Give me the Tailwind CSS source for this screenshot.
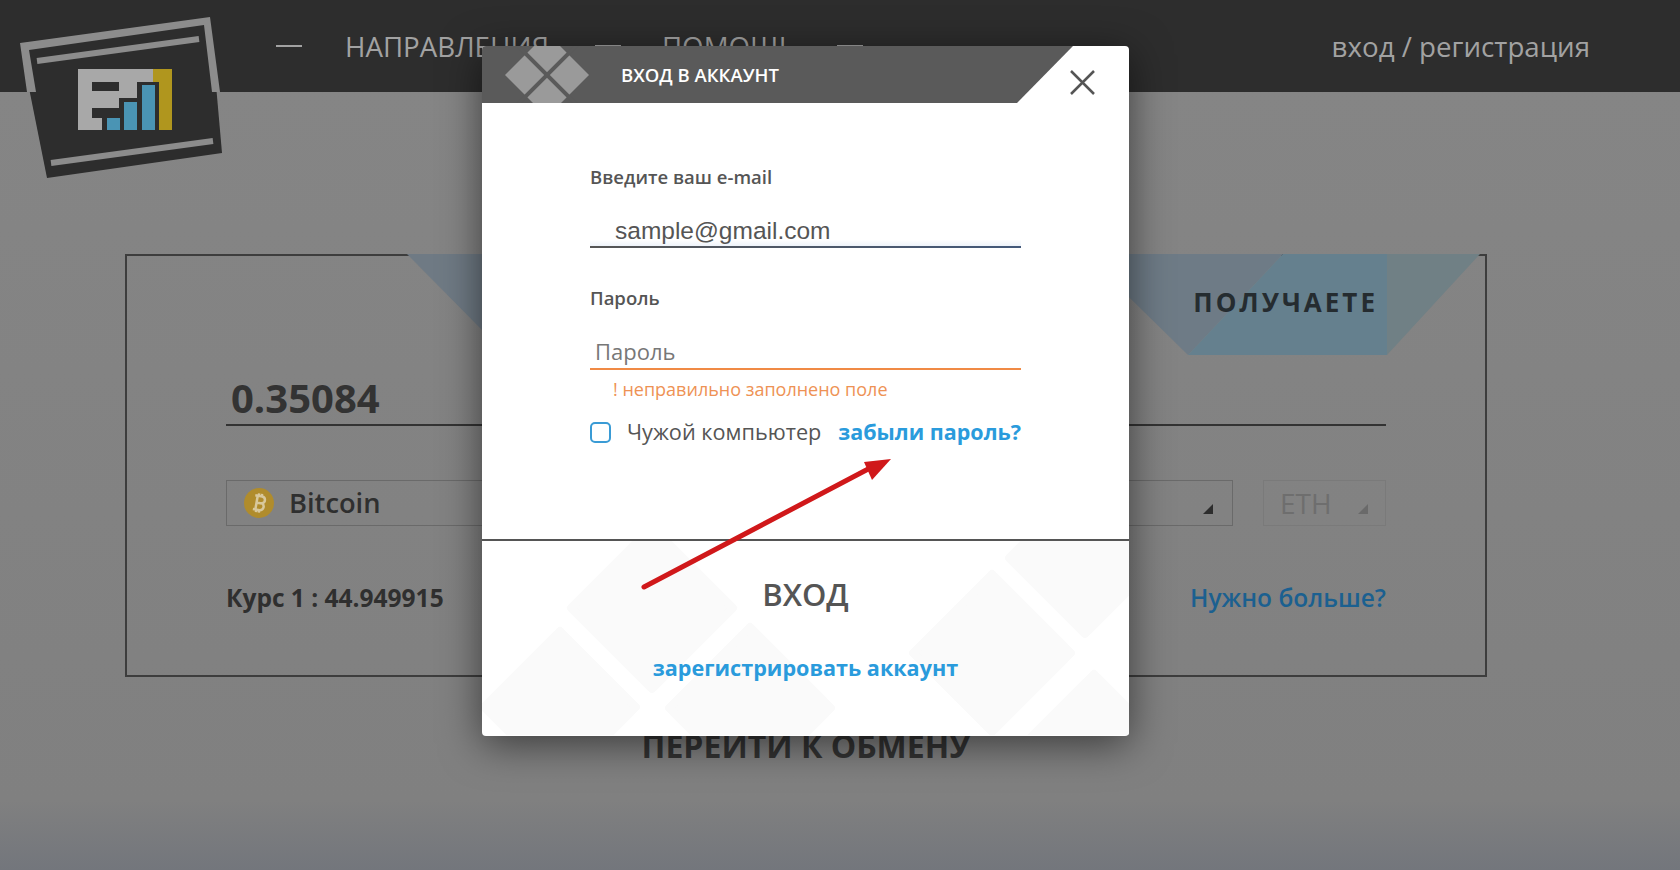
<!DOCTYPE html>
<html lang="ru">
<head>
    <meta charset="UTF-8">
    <meta name="viewport" content="width=device-width, initial-scale=1.0">
    <title>Вход в аккаунт</title>
    <script src="https://cdn.jsdelivr.net/npm/@tailwindcss/browser@4"></script>
</head>
<body class="relative h-[870px] w-[1680px] overflow-hidden bg-[#878787] font-['Open_Sans',sans-serif]">
    <!-- Dimmed page behind the modal -->
    <header class="flex h-[92px] items-center bg-[#2d2d2d] pl-[276px] pr-[90px] text-[27.7px] text-[#a2a2a2]">
        <span class="h-[2px] w-[26px] bg-[#a2a2a2]"></span>
        <a class="ml-[43px] mt-[2px]">НАПРАВЛЕНИЯ</a>
        <span class="ml-[46px] h-[2px] w-[26px] bg-[#a2a2a2]"></span>
        <a class="ml-[41px] mt-[2px]">ПОМОЩЬ</a>
        <span class="ml-[41px] h-[2px] w-[26px] bg-[#a2a2a2]"></span>
        <a class="ml-auto mt-[2px]">вход / регистрация</a>
    </header>

    <!-- Logo -->
    <svg class="absolute left-0 top-0" width="240" height="190" viewBox="0 0 240 190">
        <polygon points="20,43 210,17 222,153 47,178" fill="#2d2d2d"/>
        <polygon points="20,43 210,17 220,92 212,92 204,25 29,50 36,92 27,92" fill="#8c8c8c"/>
        <line x1="37" y1="61" x2="199" y2="39" stroke="#8c8c8c" stroke-width="6"/>
        <line x1="51" y1="163" x2="213" y2="141" stroke="#8c8c8c" stroke-width="6"/>
        <path d="M78 69h75v13h-16v16h-18v10H92v10h10v12H78z" fill="#a8a8a8"/>
        <path d="M92 82h27v9H92z" fill="#2d2d2d"/>
        <path d="M153 69h19v61h-13V82h-6z" fill="#b0961e"/>
        <rect x="107" y="118" width="13" height="12" fill="#4a94b4"/>
        <rect x="124" y="102" width="13" height="28" fill="#4a94b4"/>
        <rect x="142" y="85" width="13" height="45" fill="#4a94b4"/>
    </svg>

    <main class="h-[778px] bg-gradient-to-b from-[#858585] via-[#808080] via-[91%] to-[#73767c] pl-[125px]">
        <div class="flex w-[1362px] flex-col items-center">
            <section class="relative mt-[162px] h-[423px] w-full border-2 border-[#3d3d3d] px-[99px]">
                <svg class="absolute left-[-2px] top-[-2px]" width="1362" height="104" viewBox="125 254 1362 104">
                    <polygon points="407,254 482,330 560,254" fill="#6f7a84"/>
                    <polygon points="1085,254 1283,254 1188,355" fill="#6e7b86"/>
                    <polygon points="1283,254 1387,254 1387,355 1188,355" fill="#65808e"/>
                    <polygon points="1387,254 1480,254 1387,355" fill="#708085"/>
                </svg>
                <div class="relative">
                    <p class="mt-[28px] h-[36px] pr-[8px] text-right text-[26px] font-bold leading-[36px] tracking-[3px] text-[#252c30]">ПОЛУЧАЕТЕ</p>
                    <div class="mt-[47px] flex h-[59px] items-center border-b-2 border-[#333] pl-[5px] pt-[4px]">
                        <span class="text-[40px] font-bold text-[#333]">0.35084</span>
                    </div>
                    <div class="mt-[54px] flex h-[46px] gap-[30px]">
                        <div class="flex flex-1 items-center border border-[#6a6a6a] pl-[17px] pr-[19px]">
                            <svg width="30" height="30" viewBox="0 0 30 30">
                                <circle cx="15" cy="15" r="15" fill="#b08c2c"/>
                                <g transform="rotate(10 15 15)">
                                    <path d="M10 8h7a3.5 3.5 0 0 1 1 6.8A3.8 3.8 0 0 1 17 22h-7M12.5 8v14M12.5 15h5M13.5 5.5v2.5M16.5 5.5v2.5M13.5 22v2.5M16.5 22v2.5" fill="none" stroke="#d8c89c" stroke-width="2.5"/>
                                </g>
                            </svg>
                            <span class="ml-[15px] text-[27.3px] font-semibold text-[#2f2f2f]">Bitcoin</span>
                            <span class="ml-auto mt-[12px] size-0 border-b-[10px] border-l-[10px] border-b-[#2d2d2d] border-l-transparent"></span>
                        </div>
                        <div class="flex w-[123px] items-center border border-[#7a7a7a] pl-[16px] pr-[17px]">
                            <span class="text-[28px] text-[#6e6e6e]">ETH</span>
                            <span class="ml-auto mt-[12px] size-0 border-b-[10px] border-l-[10px] border-b-[#6a6a6a] border-l-transparent"></span>
                        </div>
                    </div>
                    <div class="mt-[54px] flex items-center justify-between text-[24.5px]">
                        <span class="font-bold text-[#2f2f2f]">Курс 1 : 44.949915</span>
                        <a class="font-semibold text-[#1b6090]">Нужно больше?</a>
                    </div>
                </div>
            </section>
            <p class="mt-[49px] text-[32px] font-bold leading-[40px] text-[#333]">ПЕРЕЙТИ К ОБМЕНУ</p>
        </div>
    </main>

    <!-- Modal -->
    <div class="absolute left-[482px] top-[46px] flex h-[690px] w-[647px] flex-col overflow-hidden rounded-[4px] bg-white shadow-[0_8px_40px_rgba(0,0,0,0.55)]">
        <div class="relative flex h-[57px] items-center">
            <svg class="absolute left-0 top-0" width="647" height="57" viewBox="482 46 647 57">
                <polygon points="482,46 1073,46 1017,103 482,103" fill="#5a5a5a"/>
                <polygon points="505,75 547,33 589,75 547,117" fill="#9a9a9a"/>
                <line x1="505" y1="33" x2="589" y2="117" stroke="#5a5a5a" stroke-width="4"/>
                <line x1="589" y1="33" x2="505" y2="117" stroke="#5a5a5a" stroke-width="4"/>
            </svg>
            <h2 class="relative ml-[139px] text-[18.5px] font-semibold text-white">ВХОД В АККАУНТ</h2>
            <svg class="absolute left-[588px] top-[24px]" width="25" height="25" viewBox="0 0 25 25">
                <path d="M1 1l23 23M24 1L1 24" stroke="#555" stroke-width="2.5" fill="none"/>
            </svg>
        </div>

        <form class="flex h-[438px] flex-col border-b-2 border-[#555] px-[108px] pt-[63px]">
            <label class="text-[18.5px] font-semibold leading-[22px] text-[#555]">Введите ваш e-mail</label>
            <div class="mt-[25px] h-[33px] bg-gradient-to-b from-white from-[80%] to-[#eef3fa] pl-[25px] font-['Liberation_Sans',sans-serif] text-[24.5px] leading-[36px] text-[#555]">sample@gmail.com</div>
            <span class="h-[2px] bg-gradient-to-r from-[#555] to-[#44597a]"></span>
            <label class="mt-[39px] text-[18.5px] font-semibold leading-[22px] text-[#555]">Пароль</label>
            <div class="mt-[26px] h-[35px] border-b-2 border-[#f08a45] pl-[5px] text-[22px] leading-[32px] text-[#777]">Пароль</div>
            <p class="mt-[8px] pl-[23px] text-[18px] leading-[22px] text-[#ee9255]">! неправильно заполнено поле</p>
            <div class="mt-[17px] flex items-center justify-between leading-[30px]">
                <div class="flex items-center">
                    <span class="size-[21px] rounded-[5px] border-2 border-[#3a9bd5]"></span>
                    <span class="ml-[16px] text-[21.7px] text-[#555]">Чужой компьютер</span>
                </div>
                <a class="text-[21.5px] font-bold text-[#2a9bdc]">забыли пароль?</a>
            </div>
        </form>

        <div class="relative flex flex-1 flex-col items-center overflow-hidden">
            <svg class="absolute left-0 top-0" width="647" height="194" viewBox="482 541 647 194">
                <g fill="#fafafa" stroke="#fafafa" stroke-width="8" stroke-linejoin="round">
                    <polygon points="571,608 652,527 733,608 652,689"/>
                    <polygon points="484,707 560,631 636,707 560,783"/>
                    <polygon points="669,708 750,627 831,708 750,789"/>
                    <polygon points="913,653 992,574 1071,653 992,732"/>
                    <polygon points="1009,558 1085,482 1161,558 1085,634"/>
                    <polygon points="1023,745 1094,674 1165,745 1094,816"/>
                </g>
            </svg>
            <button type="button" class="relative mt-[32px] text-[31px] font-semibold leading-[42px] text-[#555]">ВХОД</button>
            <a class="relative mt-[39px] text-[21.6px] font-bold leading-[28px] text-[#2a9bdc]">зарегистрировать аккаунт</a>
        </div>
    </div>

    <!-- Red annotation arrow -->
    <svg class="absolute left-0 top-0" width="1680" height="870" viewBox="0 0 1680 870">
        <line x1="644" y1="587" x2="872" y2="467" stroke="#d0181a" stroke-width="5" stroke-linecap="round"/>
        <polygon points="891,459 864,462 872,480" fill="#d0181a"/>
    </svg>
</body>
</html>
